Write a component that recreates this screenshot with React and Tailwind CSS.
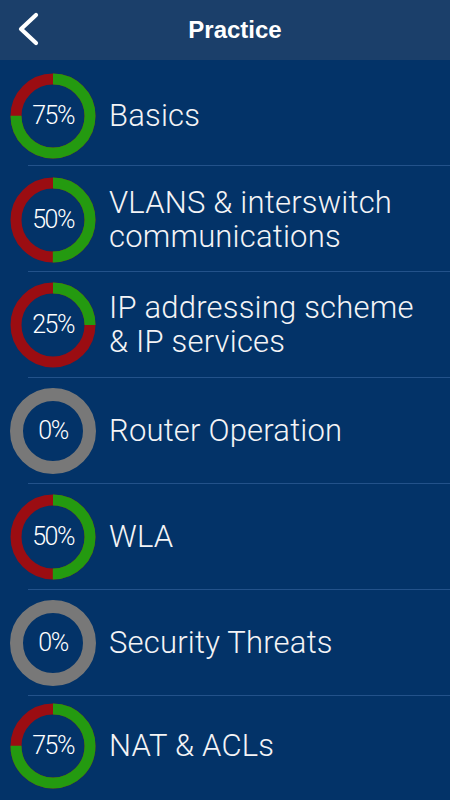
import React from "react";

const items = [
  { pct: 75, title: ["Basics"], cls: "pt-[5px]" },
  { pct: 50, title: ["VLANS & interswitch", "communications"], cls: "pt-[1px]" },
  { pct: 25, title: ["IP addressing scheme", "& IP services"], cls: "" },
  { pct: 0, title: ["Router Operation"], cls: "" },
  { pct: 50, title: ["WLA"], cls: "" },
  { pct: 0, title: ["Security Threats"], cls: "" },
  { pct: 75, title: ["NAT & ACLs"], cls: "pb-[6px]" },
];

function Ring({ pct }) {
  const r = 37;
  const c = 2 * Math.PI * r;
  if (pct === 0) {
    return (
      <svg width="86" height="86" viewBox="0 0 86 86">
        <circle cx="43" cy="43" r="36.5" fill="none" stroke="#787878" strokeWidth="13" />
      </svg>
    );
  }
  const g = (c * pct) / 100;
  return (
    <svg width="86" height="86" viewBox="0 0 86 86">
      <circle cx="43" cy="43" r={r} fill="none" stroke="#9b0d12" strokeWidth="11" />
      <circle
        cx="43"
        cy="43"
        r={r}
        fill="none"
        stroke="#249a10"
        strokeWidth="11"
        strokeDasharray={`${g} ${c}`}
        transform="rotate(-90 43 43)"
      />
    </svg>
  );
}

export default function App() {
  return (
    <div
      className="w-[450px] h-[800px] overflow-hidden bg-[#033368] flex flex-col"
      style={{ fontFamily: "Roboto, 'Liberation Sans', sans-serif" }}
    >
      <div className="h-[60px] shrink-0 bg-[#1b3f6a] relative flex items-center justify-center">
        <svg className="absolute left-[16px] top-[12px]" width="24" height="34" viewBox="0 0 24 34">
          <path d="M20 3 L5 17 L20 31" fill="none" stroke="white" strokeWidth="4.2" strokeLinecap="round" strokeLinejoin="round" />
        </svg>
        <span
          className="pl-[20px] text-white font-bold text-[24px]"
          style={{ fontFamily: "'Liberation Sans', Arial, sans-serif" }}
        >
          Practice
        </span>
      </div>
      <div className="flex flex-col">
        {items.map((it, i) => (
          <div key={i} className={`relative h-[106px] shrink-0 flex items-center pl-[10px] ${it.cls}`}>
            <div className="relative w-[86px] h-[86px] shrink-0">
              <Ring pct={it.pct} />
              <div className="absolute inset-0 flex items-center justify-center text-white font-light text-[25px] tracking-[-1.5px]">
                {it.pct}%
              </div>
            </div>
            <div className="ml-[13px] text-[#f4f4f6] font-light text-[31px] leading-[34px] tracking-[0.2px]">
              {it.title.map((t, j) => (
                <div key={j} className="whitespace-nowrap">{t}</div>
              ))}
            </div>
            {i < items.length - 1 && (
              <div className="absolute left-[28px] right-0 bottom-0 h-px bg-[#23528a]" />
            )}
          </div>
        ))}
      </div>
    </div>
  );
}
